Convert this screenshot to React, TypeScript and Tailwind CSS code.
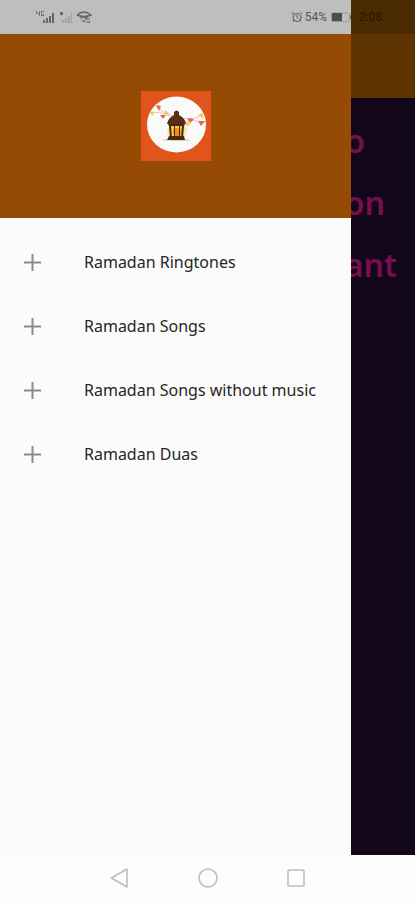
import { AlarmClock } from "lucide-react";

const ITEMS = [
  { id: "ringtones", label: "Ramadan Ringtones" },
  { id: "songs", label: "Ramadan Songs" },
  { id: "no-music", label: "Ramadan Songs without music" },
  { id: "duas", label: "Ramadan Duas" },
];

const BEHIND = [
  { text: "o", pad: "pr-[50px]" },
  { text: "on", pad: "pr-[30px]" },
  { text: "ant", pad: "pr-[18px]" },
];

function SignalIcons() {
  return (
    <svg className="w-14 h-4" viewBox="0 0 56 16" fill="#666" aria-hidden="true">
      {/* network type marks */}
      <path d="M0 2h1v2h2V2h1v5H3V5H0zM5 2h3v1H6v3h1V5h1v2H5z" opacity=".8" />
      <path d="M7 11h2v3H7zM10 9h2v5h-2zM13 7h2v7h-2zM16 4h2v10h-2z" />
      <path d="M24 3h3v3h-3z" />
      <path d="M26 11h2v3h-2zM29 9h2v5h-2zM32 7h2v7h-2zM35 4h1v10h-1z" fill="#a2a2a2" />
      <path d="M41 6Q48 0 55 6Q48 9 41 6M44 9Q48 7 52 9M46 11l3 2" fill="none" stroke="#666" strokeWidth="1.4" />
      <path d="M49 10h5M50 13h4M50 9l-1 1 1 1M53 12l1 1-1 1" fill="none" stroke="#666" />
    </svg>
  );
}

function Battery() {
  return (
    <svg className="w-5 h-3" viewBox="0 0 20 12" aria-hidden="true">
      <rect x=".5" y="2" width="18" height="8.500" rx="2" fill="none" stroke="#999" />
      <rect x="1" y="2" width="10" height="8" fill="#4d4d4d" />
      <path d="M19 4h1v4h-1z" fill="#777" />
    </svg>
  );
}

function Lantern() {
  return (
    <svg className="w-[70px] h-[70px]" viewBox="0 0 70 70" role="img" aria-label="Ramadan lantern">
      <rect width="70" height="70" fill="#e0551b" />
      <ellipse cx="35.500" cy="33.500" rx="29.500" ry="28" fill="#fafafa" />
      <path d="M14 13Q21 22 32 25M9 22Q18 20 29 25M40 27Q54 30 62 22M41 31Q52 28 63 31" fill="none" stroke="#c9b8ac" strokeWidth=".7" />
      <path d="M15 14l5 1-2 5zM19 24l6 0-3 4zM46 27l7 1-4 4zM57 30l7 0-4 5z" fill="#e6693e" />
      <path d="M9 20l5 1-3 4zM24 19l4 3-4 3zM57 24l5-2 0 6zM44 31l6 1-4 4z" fill="#f3cc55" />
      <ellipse cx="35" cy="49" rx="15" ry="1.200" fill="#ddd6c8" />
      <ellipse cx="36" cy="40" rx="10" ry="8" fill="#f8e9a3" />
      <path d="M29 34h13v13H29z" fill="#f2cf48" />
      <circle cx="36" cy="41" r="4" fill="#ef8d16" />
      <path d="M33 21q2.500-3 5 0v3q6 3 7 9H26q1-6 7-9z" fill="#5b2d16" />
      <path d="M27 33h17l-1 2H28zM28 35h2l1 12h-2zM33 35h1v10h-1zM38 35h1v10h-1zM41 35h2l-1 12h-2zM28 45h15l1 4H26z" fill="#4c2714" />
    </svg>
  );
}

function PlusIcon() {
  return (
    <svg className="w-[17px] h-[17px] shrink-0" viewBox="0 0 17 17" aria-hidden="true">
      <path d="M8.500 0v17M0 8.500h17" stroke="#8a8a8a" strokeWidth="2" />
    </svg>
  );
}

function Drawer() {
  return (
    <aside className="flex-1 min-w-0 flex flex-col bg-[#fbfbfb]">
      <div className="h-[34px] pl-9 flex items-center justify-between bg-[#bebebe]">
        <SignalIcons />
        <div className="flex items-center gap-0.5 font-[Roboto,sans-serif] text-xs text-[#555]">
          <AlarmClock className="w-3 h-3" />
          <span>54%</span>
          <span className="ml-0.5"><Battery /></span>
        </div>
      </div>
      <header className="h-[184px] flex items-center justify-center bg-[#964b05]">
        <Lantern />
      </header>
      <ul className="pt-3">
        {ITEMS.map((it) => (
          <li key={it.id}>
            <button className="w-full h-16 px-6 flex items-center gap-[43px] text-left text-base text-[#262626]">
              <PlusIcon />
              <span className="whitespace-nowrap">{it.label}</span>
            </button>
          </li>
        ))}
      </ul>
    </aside>
  );
}

function Behind() {
  return (
    <div className="w-16 shrink-0 overflow-hidden bg-[#12071a]">
      <div className="h-[34px] pl-2 flex items-center bg-[#4a2a00] font-[Roboto,sans-serif] text-xs text-[#291700]">2:08</div>
      <div className="h-16 bg-[#5e3500]" />
      <div className="pt-3">
        {BEHIND.map((b) => (
          <div key={b.text} className={`h-[62px] flex items-center justify-end text-[32px] font-semibold text-[#790e4d] ${b.pad}`}>
            {b.text}
          </div>
        ))}
      </div>
    </div>
  );
}

function NavBar() {
  return (
    <nav className="h-[45px] flex items-center justify-center gap-16 bg-[#fdfdfd]">
      <button aria-label="Back" className="w-6 h-6">
        <svg viewBox="0 0 24 24" fill="none" stroke="#bcbcbc" strokeWidth="1.500" strokeLinejoin="round"><path d="M19 3v18L3.500 12z" /></svg>
      </button>
      <button aria-label="Home" className="w-6 h-6">
        <svg viewBox="0 0 24 24" fill="none" stroke="#bcbcbc" strokeWidth="1.500"><circle cx="12" cy="12" r="9" /></svg>
      </button>
      <button aria-label="Recent apps" className="w-6 h-6">
        <svg viewBox="0 0 24 24" fill="none" stroke="#bcbcbc" strokeWidth="1.500"><rect x="4" y="4" width="16" height="16" rx="1" /></svg>
      </button>
    </nav>
  );
}

export default function App() {
  return (
    <div className="min-h-screen flex flex-col font-['Noto_Sans',sans-serif]">
      <main className="flex-1 flex">
        <Drawer />
        <Behind />
      </main>
      <NavBar />
    </div>
  );
}
